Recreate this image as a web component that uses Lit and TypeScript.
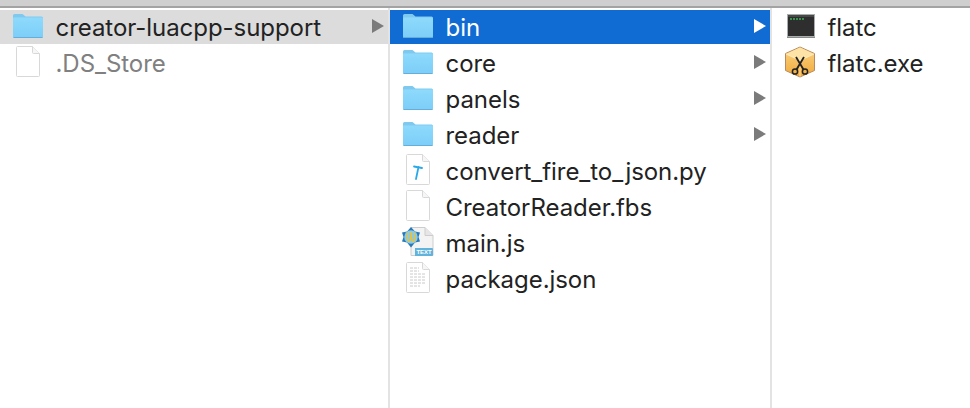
import { LitElement, html, css, svg } from 'lit';
import { customElement } from 'lit/decorators.js';

type Kind = 'folder' | 'blank' | 'py' | 'js' | 'doc' | 'term' | 'exe';
interface Row {
  name: string;
  icon: Kind;
  arrow?: boolean;
  state?: 'active' | 'inactive';
  dim?: boolean;
}

const col1: Row[] = [
  { name: 'creator-luacpp-support', icon: 'folder', arrow: true, state: 'inactive' },
  { name: '.DS_Store', icon: 'blank', dim: true },
];
const col2: Row[] = [
  { name: 'bin', icon: 'folder', arrow: true, state: 'active' },
  { name: 'core', icon: 'folder', arrow: true },
  { name: 'panels', icon: 'folder', arrow: true },
  { name: 'reader', icon: 'folder', arrow: true },
  { name: 'convert_fire_to_json.py', icon: 'py' },
  { name: 'CreatorReader.fbs', icon: 'blank' },
  { name: 'main.js', icon: 'js' },
  { name: 'package.json', icon: 'doc' },
];
const col3: Row[] = [
  { name: 'flatc', icon: 'term' },
  { name: 'flatc.exe', icon: 'exe' },
];

const sheet = svg`<path d="M5.500 .5h15l7 7v22a1 1 0 0 1-1 1h-21a1 1 0 0 1-1-1v-28a1 1 0 0 1 1-1z" fill="#fff" stroke="#d8d8d8"/><path d="M20.500 .5v6a1 1 0 0 0 1 1h6" fill="#f6f6f6" stroke="#d8d8d8"/>`;

const icons: Record<Kind, unknown> = {
  folder: svg`
    <defs><linearGradient id="fold" x1="0" y1="0" x2="0" y2="1"><stop offset="0" stop-color="#8edafd"/><stop offset="1" stop-color="#7ccdf8"/></linearGradient></defs>
    <path d="M1 5.500a1.500 1.500 0 0 1 1.500-1.500h8l3 2.500h16a1.500 1.500 0 0 1 1.500 1.500v4h-30z" fill="#7fc9ef"/>
    <path d="M1 8.500a1 1 0 0 1 1-1h28a1 1 0 0 1 1 1v18a1.500 1.500 0 0 1-1.500 1.500h-27a1.500 1.500 0 0 1-1.500-1.500z" fill="url(#fold)"/>
    <path d="M1.500 27.500h29" stroke="#64aeda" stroke-width="1"/>`,
  blank: sheet,
  py: svg`${sheet}<path d="M12 12.500l8 1.500M16.500 13l-2.500 12" fill="none" stroke="#2aa9e8" stroke-width="1.800" stroke-linecap="round"/>`,
  doc: svg`${sheet}<path d="M8 6h9M8 9h9M8 12h15M8 15h15M8 18h15M8 21h15M8 24h10" stroke="#cacaca" stroke-width="1" stroke-dasharray="3 1"/>`,
  js: svg`
    <path d="M9 1.500h14l8 8v20h-22z" fill="#f3f3f3" stroke="#cdcdcd"/>
    <path d="M23 1.500v8h8" fill="#e6e6e6" stroke="#cdcdcd"/>
    <path d="M13 22h17a1 1 0 0 1 1 1v6a1 1 0 0 1-1 1h-17z" fill="#62b3dc"/>
    <text x="22" y="28.300" font-size="6" font-weight="700" text-anchor="middle" fill="#fff" font-family="Liberation Sans, sans-serif">TEXT</text>
    <path d="M9 1l4 4.500 5 1-1.500 4.500 1.500 4.500-5 1-4 5-4-5-5-1 1.500-4.500-1.500-4.500 5-1z" fill="#2a78b6"/>
    <circle cx="9" cy="11" r="6.800" fill="#86cbec"/>
    <path d="M6 6.500c-1.500 5 0 9.500 1.500 8.500s1.500-7 1.500-8.500 0 7.500 2 8.500 2.500-5 1-8.500" fill="none" stroke="#e8c23c" stroke-width="1.500"/>`,
  term: svg`
    <rect x="3.500" y="4.500" width="27" height="22" fill="#2e2e2e" stroke="#a8aeae"/>
    <rect x="4" y="5" width="26" height="2" fill="#484848"/>
    <path d="M6 9h2M9 9h2M12 9h2M15 9h2M18 9h2" stroke="#3fb45a" stroke-width="1.400"/>
    <path d="M3 27.500h28" stroke="#8a8a8a"/>`,
  exe: svg`
    <defs><linearGradient id="box" x1="0" y1="0" x2="0" y2="1"><stop offset="0" stop-color="#fbd483"/><stop offset="1" stop-color="#f0a93a"/></linearGradient></defs>
    <path d="M16 1l14.500 6.500v17l-14.500 6.500-14.500-6.500v-17z" fill="url(#box)" stroke="#b98a60"/>
    <path d="M2 8l14 6.500 14-6.500-14-6.500z" fill="#fde3a6"/>
    <path d="M16 14.500v16M2 8l14 6.500 14-6.500" fill="none" stroke="#fff0c8" stroke-width=".8"/>
    <path d="M12 11l7.500 12.500M20 11l-7.500 12.500" stroke="#222" stroke-width="1.800"/>
    <circle cx="11" cy="25.500" r="2.600" fill="none" stroke="#222" stroke-width="1.500"/>
    <circle cx="21" cy="25.500" r="2.600" fill="none" stroke="#222" stroke-width="1.500"/>`,
};

@customElement('app-root')
export class AppRoot extends LitElement {
  static styles = css`
    :host {
      display: block;
      width: 970px;
      height: 408px;
      background: #fff;
      overflow: hidden;
      font-family: 'Inter', 'Liberation Sans', sans-serif;
    }
    .topbar {
      height: 6px;
      background: #cfcfcf;
      border-bottom: 2px solid #a3a3a3;
    }
    .browser {
      display: grid;
      grid-template-columns: 390px 382px 198px;
      height: 400px;
    }
    .col {
      display: flex;
      flex-direction: column;
      gap: 2px;
      padding-top: 2px;
      border-right: 2px solid #e3e3e3;
      min-width: 0;
    }
    .col:last-child {
      border-right: 0;
    }
    .row {
      display: flex;
      align-items: center;
      height: 34px;
      color: #222;
      font-size: 24px;
      letter-spacing: -0.05px;
      white-space: nowrap;
    }
    .row.active {
      background: #106bd3;
      color: #fff;
    }
    .row.inactive {
      background: #dcdcdc;
    }
    .row.dim {
      color: #808080;
    }
    .row svg.icon {
      width: 34px;
      height: 34px;
      margin-left: 12px;
      flex: none;
    }
    .name {
      margin-left: 9.500px;
      flex: 1;
    }
    .arrow {
      width: 12px;
      height: 14px;
      margin: 0 4px 2px 0;
      flex: none;
      fill: #7b7b7b;
    }
    .active .arrow {
      fill: #fff;
    }
  `;

  private renderRow(r: Row) {
    const cls = ['row', r.state ?? '', r.dim ? 'dim' : ''].join(' ');
    return html`<div class=${cls}>
      <svg class="icon" viewBox="0 0 34 34">${icons[r.icon]}</svg>
      <span class="name">${r.name}</span>
      ${r.arrow
        ? html`<svg class="arrow" viewBox="0 0 12 14"><path d="M0 0l12 7-12 7z" /></svg>`
        : ''}
    </div>`;
  }

  render() {
    return html`
      <div class="topbar"></div>
      <div class="browser">
        ${[col1, col2, col3].map(
          (c) => html`<div class="col">${c.map((r) => this.renderRow(r))}</div>`
        )}
      </div>
    `;
  }
}
